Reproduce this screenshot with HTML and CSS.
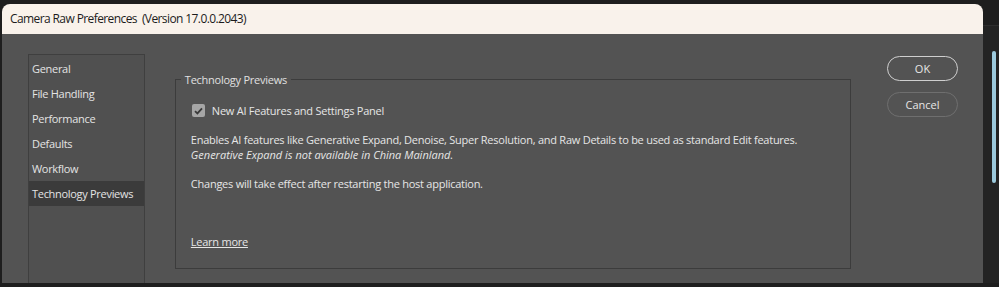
FILE: index.html
```html
<!DOCTYPE html>
<html lang="en">
<head>
    <meta charset="UTF-8">
    <title>Camera Raw Preferences</title>
    <link rel="stylesheet" href="styles.css">
</head>
<body>
    <div class="screen">
        <div class="dialog">
            <div class="titlebar">Camera Raw Preferences&nbsp;&nbsp;(Version 17.0.0.2043)</div>
            <div class="body">
                <ul class="nav">
                    <li>General</li>
                    <li>File Handling</li>
                    <li>Performance</li>
                    <li>Defaults</li>
                    <li>Workflow</li>
                    <li class="active">Technology Previews</li>
                </ul>

                <fieldset class="group">
                    <legend>Technology Previews</legend>
                    <label class="check">
                        <span class="box">
                            <svg width="9" height="8" viewBox="0 0 9 8"><path d="M1 4.2 L3.4 6.4 L8 1.3" fill="none" stroke="#3a3a3a" stroke-width="1.8"/></svg>
                        </span>
                        New AI Features and Settings Panel
                    </label>
                    <p class="desc">
                        Enables AI features like Generative Expand, Denoise, Super Resolution, and Raw Details to be used as standard Edit features.<br>
                        <em>Generative Expand is not available in China Mainland.</em>
                    </p>
                    <p class="desc">Changes will take effect after restarting the host application.</p>
                    <a class="learn" href="#">Learn more</a>
                </fieldset>

                <div class="buttons">
                    <button class="btn primary">OK</button>
                    <button class="btn">Cancel</button>
                </div>
            </div>
        </div>
        <div class="side">
            <div class="scroll"></div>
        </div>
    </div>
</body>
</html>
```

FILE: styles.css
```css
* {
    margin: 0;
    padding: 0;
    box-sizing: border-box;
}

body {
    font-family: 'Open Sans', 'Noto Sans', sans-serif;
    letter-spacing: -0.25px;
    background: #1e1e1e;
    width: 999px;
    height: 287px;
    overflow: hidden;
}

.screen {
    display: flex;
    height: 287px;
    padding: 4px 0 4px 2px;
}

.dialog {
    width: 981px;
    display: flex;
    flex-direction: column;
    border-radius: 8px 8px 0 0;
    overflow: hidden;
}

.titlebar {
    height: 30px;
    background: #f9f2eb;
    color: #1c1c1c;
    font-size: 12px;
    letter-spacing: -0.6px;
    line-height: 30px;
    padding-left: 8px;
}

.body {
    flex: 1;
    background: #535353;
    display: flex;
    padding: 20px 25px 0 26px;
}

.nav {
    list-style: none;
    width: 117px;
    border: 1px solid #3f3f3f;
    border-bottom: none;
    background: #505050;
    padding-top: 1px;
}

.nav li {
    height: 25px;
    line-height: 25px;
    padding-left: 3px;
    font-size: 11px;
    letter-spacing: -0.3px;
    color: #e4e4e4;
}

.nav li.active {
    background: #3b3b3b;
}

.group {
    width: 677px;
    height: 197px;
    margin: 18px 0 0 30px;
    border: 1px solid #3c3c3c;
    padding: 16px 16px 0 15px;
    color: #e6e6e6;
    font-size: 11px;
}

.group legend {
    margin-left: -10px;
    padding: 0 4px;
    font-size: 11px;
    color: #e0e0e0;
}

.check {
    display: flex;
    align-items: center;
    gap: 7px;
    margin-left: 1px;
}

.box {
    width: 13px;
    height: 13px;
    border-radius: 2px;
    background: #a6a6a6;
    display: flex;
    align-items: center;
    justify-content: center;
}

.desc {
    margin-top: 14px;
    line-height: 15px;
}

.desc em {
    letter-spacing: 0;
}

.learn {
    display: inline-block;
    margin-top: 43px;
    color: #e6e6e6;
}

.buttons {
    margin: 2px 0 0 36px;
    display: flex;
    flex-direction: column;
    gap: 11px;
}

.btn {
    width: 71px;
    height: 25px;
    border-radius: 13px;
    background: transparent;
    border: 1px solid #6f6f6f;
    color: #e6e6e6;
    font-family: inherit;
    font-size: 11px;
}

.btn.primary {
    border-color: #cfcfcf;
}

.side {
    flex: 1;
    margin-top: 21px;
    border-top: 1px solid #2e2e2e;
    background: #232323;
    padding: 25px 2px 0 9px;
}

.scroll {
    width: 4px;
    height: 132px;
    border-radius: 2px;
    background: #9ccadd;
}
```
